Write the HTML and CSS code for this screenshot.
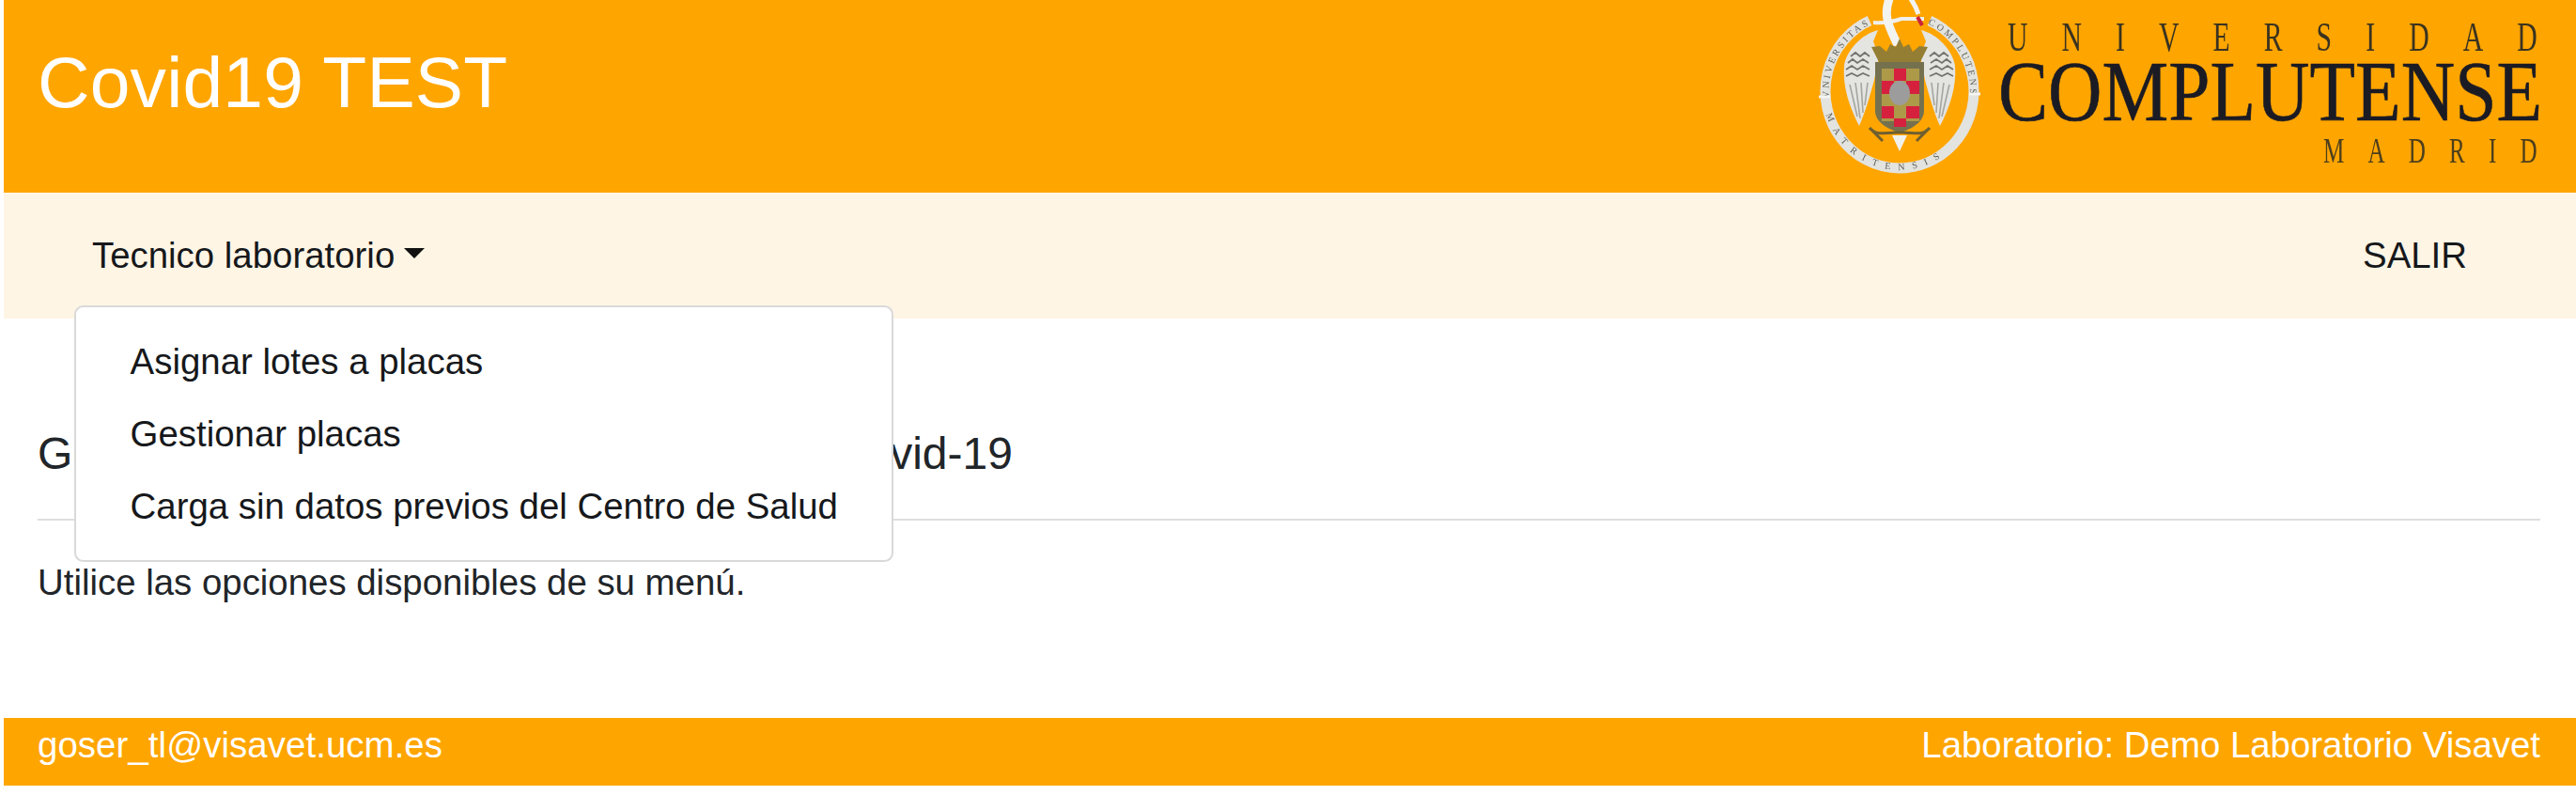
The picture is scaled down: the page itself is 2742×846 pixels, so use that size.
FILE: index.html
```html
<!DOCTYPE html>
<html lang="es">
<head>
<meta charset="utf-8">
<title>Covid19 TEST</title>
<link rel="stylesheet" href="styles.css">
</head>
<body>
<div class="page">
  <header class="top">
    <h1 class="title">Covid19 TEST</h1>
    <svg class="logo" viewBox="1920 0 822 205" width="822" height="205" role="img" aria-label="Universidad Complutense Madrid">
      <defs>
        <path id="arcL" d="M1947 104 A75 78 0 0 1 1992 25.5"/>
        <path id="arcR" d="M2052 25.5 A75 78 0 0 1 2097 104"/>
        <path id="arcB" d="M1944 122 A82 85 0 0 0 2100 122"/>
        <g id="wing">
          <path d="M1999 32 C1982 36 1965 54 1963 70 C1961 92 1969 115 1979 134 C1986 118 1991 100 1995 85 L2000 60 L1994 44 Z" fill="#e4e4e1"/>
          <path d="M1970 60 l5 -4 l5 4 l5 -4 l5 4 M1967 67 l5 -4 l5 4 l6 -4 l6 4 M1965 74 l6 -4 l6 4 l6 -4 l7 4 M1965 81 l6 -3 l6 3 l6 -3 l7 3" fill="none" stroke="#73736e" stroke-width="1.8"/>
          <path d="M1969 90 L1977 124 M1975 88 L1980 126 M1981 88 L1983 120 M1988 88 L1985 112" fill="none" stroke="#a4a4a0" stroke-width="1.6"/>
        </g>
      </defs>
      <path class="ring" d="M1990 22 A79 82 0 1 0 2054 22"/>
      <text class="ring-text"><textPath href="#arcL">VNIVERSITAS</textPath></text>
      <text class="ring-text"><textPath href="#arcR">COMPLUTENSIS</textPath></text>
      <text class="ring-text wide"><textPath href="#arcB">MATRITENSIS</textPath></text>
      <path class="sep" d="M1936 103 L1948 103 M2096 100 L2108 100"/>
      <path class="bar" d="M1994 24 C2005 25 2015 23 2024 20 L2048 20"/>
      <path class="neck" d="M2020 48 C2012 30 2003 18 2012 -4"/>
      <path class="neck thin" d="M2032 -4 C2038 4 2040 9 2042 15"/>
      <path class="beak" d="M2041 18 L2046 27"/>
      <use href="#wing"/>
      <use href="#wing" transform="translate(4044 0) scale(-1 1)"/>
      <path class="crown" d="M1992 50 L2001 49 L2008 55 L2012 47 L2018 50 L2022 41 L2026 50 L2032 47 L2036 55 L2043 49 L2052 50 L2044 66 L2000 66 Z"/>
      <path class="shield" d="M1996 66 L2048 66 L2048 118 C2048 130 2034 138 2022 141 C2010 138 1996 130 1996 118 Z"/>
      <g class="checks">
        <rect class="gold" x="2003" y="73" width="40" height="56"/>
        <rect class="red" x="2016" y="73" width="13" height="13"/>
        <rect class="red" x="2003" y="86" width="13" height="14"/>
        <rect class="red" x="2029" y="86" width="14" height="14"/>
        <rect class="red" x="2003" y="113" width="13" height="13"/>
        <rect class="red" x="2029" y="113" width="14" height="13"/>
        <rect class="red" x="2016" y="126" width="13" height="9"/>
      </g>
      <ellipse class="orb" cx="2022" cy="99" rx="11" ry="13"/>
      <path class="cord" d="M1990 136 C1998 146 2008 140 2022 141 C2036 140 2046 146 2054 136 M1992 138 L2004 150 M2052 138 L2040 150"/>
      <path class="drop" d="M2014 144 L2030 144 L2022 161 Z"/>
      <text class="l-small" transform="translate(2137 54) scale(.66 1)" textLength="854" lengthAdjust="spacing">UNIVERSIDAD</text>
      <text class="l-big" x="2127" y="128" textLength="579" lengthAdjust="spacingAndGlyphs">COMPLUTENSE</text>
      <text class="l-mad" transform="translate(2473 173) scale(.66 1)" textLength="345" lengthAdjust="spacing">MADRID</text>
    </svg>
  </header>
  <nav class="nav">
    <div class="menu">
      <a class="nav-link">Tecnico laboratorio<span class="caret"></span></a>
      <ul class="dropdown">
        <li class="item">Asignar lotes a placas</li>
        <li class="item">Gestionar placas</li>
        <li class="item">Carga sin datos previos del Centro de Salud</li>
      </ul>
    </div>
    <a class="nav-link">SALIR</a>
  </nav>
  <main class="main">
    <h5 class="heading">Gestión de muestras de diagnóstico de Covid-19</h5>
    <hr class="rule">
    <p class="lead">Utilice las opciones disponibles de su menú.</p>
  </main>
  <footer class="foot">
    <span class="mail">goser_tl@visavet.ucm.es</span>
    <span>Laboratorio: Demo Laboratorio Visavet</span>
  </footer>
</div>
</body>
</html>
```
FILE: styles.css
```css
* { box-sizing: border-box; }
html, body { margin: 0; padding: 0; }
body {
  font-family: "Liberation Sans", Arial, sans-serif;
  font-size: 38.4px;
  line-height: 57.6px;
  color: #212529;
  background: #fff;
}
.page {
  height: 846px;
  padding: 0 0 10px 4px;
  display: flex;
  flex-direction: column;
  overflow: hidden;
}
.top {
  height: 205px;
  flex: none;
  background: #ffa500;
  display: flex;
  justify-content: space-between;
  padding-left: 36px;
}
.title {
  margin: 0;
  padding-top: 41px;
  font-size: 76.8px;
  line-height: 92px;
  font-weight: 400;
  letter-spacing: .2px;
  color: #fff;
}
.logo { flex: none; display: block; filter: blur(.6px); }
.ring { fill: none; stroke: #e3e3df; stroke-width: 11; }
.ring-text { font-family: "Liberation Serif", serif; font-size: 10px; fill: #5f5f58; letter-spacing: 2.8px; }
.wide { letter-spacing: 8.5px; }
.sep { fill: none; stroke: #f4f4f2; stroke-width: 3; }
.bar { fill: none; stroke: #efefec; stroke-width: 4; }
.neck { fill: none; stroke: #f3f3f0; stroke-width: 9; }
.thin { stroke-width: 5; }
.beak { fill: none; stroke: #c9223c; stroke-width: 4; }
.crown { fill: #947e33; }
.shield { fill: #75714f; }
.gold { fill: #ad9a48; }
.red { fill: #d5203e; }
.orb { fill: #9c9c9c; }
.cord { fill: none; stroke: #6e5f30; stroke-width: 3; }
.drop { fill: #f0f0ec; }
.l-small, .l-mad, .l-big { font-family: "Liberation Serif", serif; fill: #1b1b24; }
.l-small { font-size: 45px; fill: #3a3320; }
.l-mad { font-size: 38px; fill: #4d3f1c; }
.l-big { font-size: 92px; stroke: #1b1b24; stroke-width: .6px; }
.nav {
  flex: none;
  height: 134px;
  background: #fff5e5;
  display: flex;
  justify-content: space-between;
  align-items: center;
  padding: 0 116px 0 94px;
  color: #16181b;
}
.menu { position: relative; }
.nav-link { display: block; }
.caret {
  display: inline-block;
  margin-left: 9.8px;
  vertical-align: 9.8px;
  border-top: 11.5px solid #111;
  border-left: 11.5px solid transparent;
  border-right: 11.5px solid transparent;
}
.dropdown {
  position: absolute;
  left: -19px;
  top: 82px;
  width: 872px;
  margin: 0;
  padding: 19.2px 0;
  list-style: none;
  background: #fff;
  border: 2.4px solid rgba(0, 0, 0, .15);
  border-radius: 9.6px;
}
.item { padding: 9.6px 57.6px; white-space: nowrap; }
.main {
  flex: 1;
  padding: 115px 38px 0 36px;
}
.heading {
  margin: 0;
  font-size: 48px;
  line-height: 57.6px;
  font-weight: 400;
}
.rule {
  margin: 40px 0 0;
  border: 0;
  border-top: 2.4px solid #dfdfdf;
}
.lead { margin: 37px 0 0; }
.foot {
  flex: none;
  height: 72px;
  background: #ffa500;
  color: #fff;
  display: flex;
  justify-content: space-between;
  padding: 0 38px 0 36px;
}
.mail { letter-spacing: .07px; }
```
